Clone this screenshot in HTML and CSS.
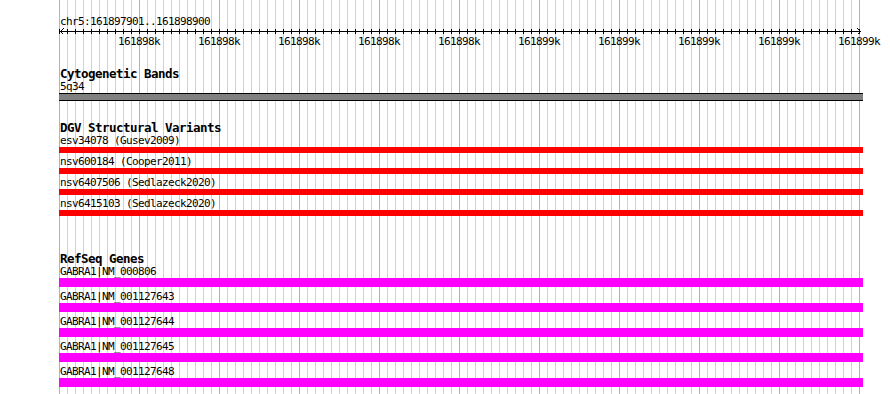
FILE: index.html
```html
<!DOCTYPE html>
<html lang="en">
<head>
    <meta charset="UTF-8">
    <meta name="viewport" content="width=device-width, initial-scale=1.0">
    <title>chr5:161897901..161898900</title>
    <link rel="stylesheet" href="styles.css">
</head>
<body>
    <div class="browser">
        <div class="overview">
            <div class="locus">chr5:161897901..161898900</div>
            <svg class="ruler" width="804" height="7" viewBox="0 0 804 7">
                <defs>
                    <pattern id="tick" width="8" height="7" patternUnits="userSpaceOnUse">
                        <rect x="0" y="1" width="1" height="5" fill="#000"/>
                    </pattern>
                </defs>
                <rect x="0" y="0" width="801" height="7" fill="url(#tick)"/>
                <path d="M1 3.5H802 M4.5 0.5L1.5 3.5L4.5 6.5 M798.5 0.5L801.5 3.5L798.5 6.5" stroke="#000" fill="none"/>
            </svg>
            <div class="ticks">
                <span>161898k</span>
                <span>161898k</span>
                <span>161898k</span>
                <span>161898k</span>
                <span>161898k</span>
                <span>161899k</span>
                <span>161899k</span>
                <span>161899k</span>
                <span>161899k</span>
                <span>161899k</span>
            </div>
        </div>

        <section class="track cyto">
            <h2 class="track-title">Cytogenetic Bands</h2>
            <div class="feature">
                <div class="label">5q34</div>
                <div class="bar band"></div>
            </div>
        </section>

        <section class="track dgv">
            <h2 class="track-title">DGV Structural Variants</h2>
            <div class="feature">
                <div class="label">esv34078 (Gusev2009)</div>
                <div class="bar variant"></div>
            </div>
            <div class="feature">
                <div class="label">nsv600184 (Cooper2011)</div>
                <div class="bar variant"></div>
            </div>
            <div class="feature">
                <div class="label">nsv6407506 (Sedlazeck2020)</div>
                <div class="bar variant"></div>
            </div>
            <div class="feature">
                <div class="label">nsv6415103 (Sedlazeck2020)</div>
                <div class="bar variant"></div>
            </div>
        </section>

        <section class="track refseq">
            <h2 class="track-title">RefSeq Genes</h2>
            <div class="feature">
                <div class="label">GABRA1|NM_000806</div>
                <div class="bar gene"></div>
            </div>
            <div class="feature">
                <div class="label">GABRA1|NM_001127643</div>
                <div class="bar gene"></div>
            </div>
            <div class="feature">
                <div class="label">GABRA1|NM_001127644</div>
                <div class="bar gene"></div>
            </div>
            <div class="feature">
                <div class="label">GABRA1|NM_001127645</div>
                <div class="bar gene"></div>
            </div>
            <div class="feature">
                <div class="label">GABRA1|NM_001127648</div>
                <div class="bar gene"></div>
            </div>
        </section>
    </div>
</body>
</html>
```

FILE: styles.css
```css
body {
    margin: 0;
    background: #fff;
    color: #000;
    font-family: "DejaVu Sans Mono", "Liberation Mono", monospace;
    font-size: 11px;
    letter-spacing: -0.62px;
    overflow: hidden;
}

.browser {
    margin-left: 59px;
    width: 804px;
    min-height: 100vh;
    padding-top: 15px;
    box-sizing: border-box;
    background-image:
        repeating-linear-gradient(to right, #86c0e6 0 1px, transparent 1px 80px),
        repeating-linear-gradient(to right, #a6e2e6 0 1px, transparent 1px 8px);
    background-size: 801px 100%;
    background-repeat: no-repeat;
}

.locus,
.label {
    line-height: 13px;
    padding-left: 1px;
    white-space: nowrap;
}

.ruler {
    display: block;
    shape-rendering: crispEdges;
}

.ticks {
    display: flex;
    margin-left: 40px;
    line-height: 13px;
}

.ticks span {
    flex: 0 0 80px;
    text-align: center;
}

.track-title {
    margin: 0;
    padding-left: 1px;
    font-size: 12.5px;
    letter-spacing: -0.53px;
    font-weight: bold;
    line-height: 12px;
}

.cyto {
    margin-top: 20px;
}

.dgv {
    margin-top: 21px;
}

.refseq {
    margin-top: 37px;
}

.bar {
    width: 804px;
}

.band {
    height: 6px;
    background: #808080;
    border-top: 1px solid #000;
    border-bottom: 1px solid #000;
}

.variant {
    height: 6px;
    background: #ff0000;
}

.dgv .feature + .feature {
    margin-top: 2px;
}

.gene {
    height: 9px;
    background: #ff00ff;
}

.refseq .feature + .feature {
    margin-top: 3px;
}
```
